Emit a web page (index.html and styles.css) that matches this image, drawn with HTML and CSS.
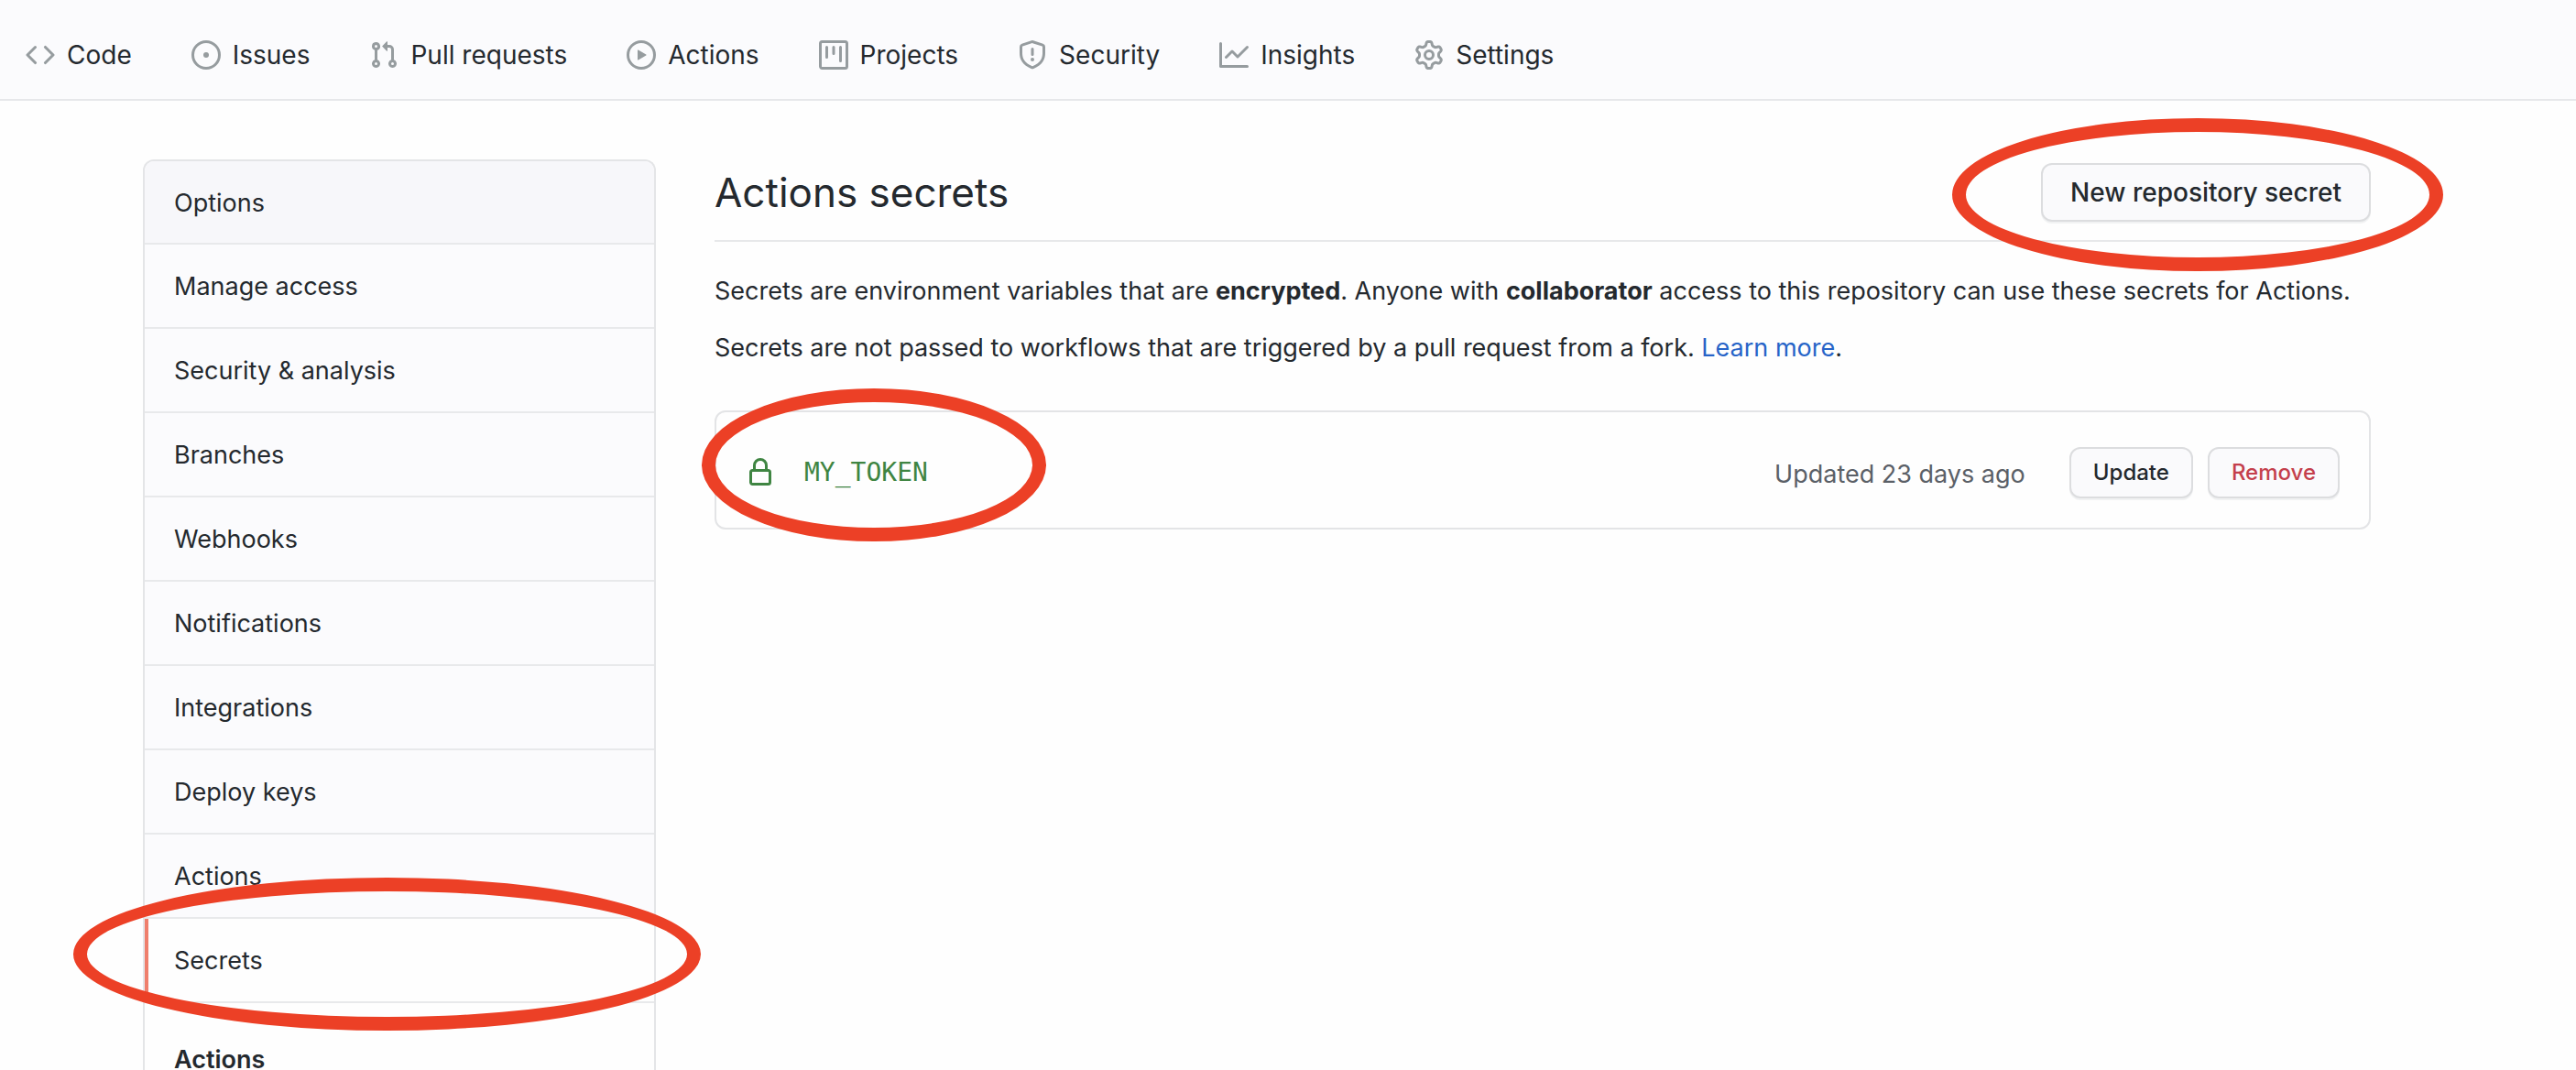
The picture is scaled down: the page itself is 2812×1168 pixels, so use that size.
FILE: index.html
```html
<!DOCTYPE html>
<html lang="en">
<head>
<meta charset="utf-8">
<title>Actions secrets</title>
<link rel="stylesheet" href="styles.css">
</head>
<body>
<nav class="repo-nav" aria-label="Repository">
  <a class="tab" href="#"><svg class="icon" viewBox="0 0 16 16"><path d="M4.72 3.22a.75.75 0 011.06 1.06L2.06 8l3.72 3.72a.75.75 0 11-1.06 1.06L.47 8.53a.75.75 0 010-1.06l4.25-4.25zm6.56 0a.75.75 0 10-1.06 1.06L13.94 8l-3.72 3.72a.75.75 0 101.06 1.06l4.25-4.25a.75.75 0 000-1.06l-4.25-4.25z"/></svg>Code</a>
  <a class="tab" href="#"><svg class="icon" viewBox="0 0 16 16"><circle class="line" cx="8" cy="8" r="7.25"/><circle cx="8" cy="8" r="1.5"/></svg>Issues</a>
  <a class="tab" href="#"><svg class="icon" viewBox="0 0 16 16"><path fill-rule="evenodd" d="M7.177 3.073L9.573.677A.25.25 0 0110 .854v4.792a.25.25 0 01-.427.177L7.177 3.427a.25.25 0 010-.354zM3.75 2.5a.75.75 0 100 1.5.75.75 0 000-1.5zm-2.25.75a2.25 2.25 0 113 2.122v5.256a2.251 2.251 0 11-1.5 0V5.372A2.25 2.25 0 011.5 3.25zM11 2.5h-1V4h1a1 1 0 011 1v5.628a2.251 2.251 0 101.5 0V5A2.5 2.5 0 0011 2.5zm1 10.25a.75.75 0 111.5 0 .75.75 0 01-1.5 0zM3.75 12a.75.75 0 100 1.5.75.75 0 000-1.5z"/></svg>Pull requests</a>
  <a class="tab" href="#"><svg class="icon" viewBox="0 0 16 16"><circle class="line" cx="8" cy="8" r="7.25"/><path d="M6.379 5.227A.25.25 0 006 5.442v5.117a.25.25 0 00.379.214l4.264-2.559a.25.25 0 000-.428L6.379 5.227z"/></svg>Actions</a>
  <a class="tab" href="#"><svg class="icon" viewBox="0 0 16 16"><path fill-rule="evenodd" d="M1.75 0A1.75 1.75 0 000 1.75v12.5C0 15.216.784 16 1.75 16h12.5A1.75 1.75 0 0016 14.25V1.75A1.75 1.75 0 0014.25 0H1.75zM1.5 1.75a.25.25 0 01.25-.25h12.5a.25.25 0 01.25.25v12.5a.25.25 0 01-.25.25H1.75a.25.25 0 01-.25-.25V1.75zM11.75 3a.75.75 0 00-.75.75v7.5a.75.75 0 001.5 0v-7.5a.75.75 0 00-.75-.75zm-8.25.75a.75.75 0 011.5 0v5.5a.75.75 0 01-1.5 0v-5.5zM8 3a.75.75 0 00-.75.75v3.5a.75.75 0 001.5 0v-3.5A.75.75 0 008 3z"/></svg>Projects</a>
  <a class="tab" href="#"><svg class="icon" viewBox="0 0 16 16"><path fill-rule="evenodd" d="M7.467.133a1.75 1.75 0 011.066 0l5.25 1.68A1.75 1.75 0 0115 3.48V7c0 1.566-.32 3.182-1.303 4.682-.983 1.498-2.585 2.813-5.032 3.855a1.7 1.7 0 01-1.33 0c-2.447-1.042-4.049-2.357-5.032-3.855C1.32 10.182 1 8.566 1 7V3.48a1.75 1.75 0 011.217-1.667l5.25-1.68zm.61 1.429a.25.25 0 00-.153 0l-5.25 1.68a.25.25 0 00-.174.238V7c0 1.358.275 2.666 1.057 3.86.784 1.194 2.121 2.34 4.366 3.297a.2.2 0 00.154 0c2.245-.956 3.582-2.104 4.366-3.298C13.225 9.666 13.5 8.36 13.5 7V3.48a.25.25 0 00-.174-.237l-5.25-1.68zM9 10.5a1 1 0 11-2 0 1 1 0 012 0zm-.25-5.75a.75.75 0 10-1.5 0v3a.75.75 0 001.5 0v-3z"/></svg>Security</a>
  <a class="tab" href="#"><svg class="icon" viewBox="0 0 16 16"><path d="M1.5 1.75a.75.75 0 00-1.5 0v12.5c0 .414.336.75.75.75h14.5a.75.75 0 000-1.5H1.5V1.75zm14.28 2.53a.75.75 0 00-1.06-1.06L10 7.94 7.53 5.47a.75.75 0 00-1.06 0L3.22 8.72a.75.75 0 001.06 1.06L7 7.06l2.47 2.47a.75.75 0 001.06 0l5.25-5.25z"/></svg>Insights</a>
  <a class="tab" href="#"><svg class="icon" viewBox="0 0 16 16"><path fill-rule="evenodd" d="M7.429 1.525a6.593 6.593 0 011.142 0c.036.003.108.036.137.146l.289 1.105c.147.56.55.967.997 1.189.174.086.341.183.501.29.417.278.97.423 1.53.27l1.102-.303c.11-.03.175.016.195.046.219.31.41.641.573.989.014.031.022.11-.059.19l-.815.806c-.411.406-.562.957-.53 1.456a4.588 4.588 0 010 .582c-.032.499.119 1.05.53 1.456l.815.806c.08.08.073.159.059.19a6.494 6.494 0 01-.573.99c-.02.029-.086.074-.195.045l-1.103-.303c-.559-.153-1.112-.008-1.529.27-.16.107-.327.204-.5.29-.449.222-.851.628-.998 1.189l-.289 1.105c-.029.11-.101.143-.137.146a6.613 6.613 0 01-1.142 0c-.036-.003-.108-.037-.137-.146l-.289-1.105c-.147-.56-.55-.967-.997-1.189a4.502 4.502 0 01-.501-.29c-.417-.278-.97-.423-1.53-.27l-1.102.303c-.11.03-.175-.016-.195-.046a6.492 6.492 0 01-.573-.989c-.014-.031-.022-.11.059-.19l.815-.806c.411-.406.562-.957.53-1.456a4.587 4.587 0 010-.582c.032-.499-.119-1.05-.53-1.456l-.815-.806c-.08-.08-.073-.159-.059-.19a6.44 6.44 0 01.573-.99c.02-.029.086-.075.195-.045l1.103.303c.559.153 1.112.008 1.529-.27.16-.107.327-.204.5-.29.449-.222.851-.628.998-1.189l.289-1.105c.029-.11.101-.143.137-.146zM8 0c-.236 0-.47.01-.701.03-.743.065-1.29.615-1.458 1.261l-.29 1.106c-.017.066-.078.158-.211.224a5.994 5.994 0 00-.668.386c-.123.082-.233.09-.3.071L3.27 2.776c-.644-.177-1.392.02-1.82.63a7.977 7.977 0 00-.704 1.217c-.315.675-.111 1.422.363 1.891l.815.806c.05.048.098.147.088.294a6.084 6.084 0 000 .772c.01.147-.038.246-.088.294l-.815.806c-.474.469-.678 1.216-.363 1.891.2.428.436.835.704 1.218.428.609 1.176.806 1.82.63l1.103-.303c.066-.019.176-.011.299.071.213.143.436.272.668.386.133.066.194.158.212.224l.289 1.106c.169.646.715 1.196 1.458 1.26a8.094 8.094 0 001.402 0c.743-.064 1.29-.614 1.458-1.26l.29-1.106c.017-.066.078-.158.211-.224a5.98 5.98 0 00.668-.386c.123-.082.233-.09.3-.071l1.102.302c.644.177 1.392-.02 1.82-.63.268-.382.505-.789.704-1.217.315-.675.111-1.422-.364-1.891l-.814-.806c-.05-.048-.098-.147-.088-.294a6.1 6.1 0 000-.772c-.01-.147.039-.246.088-.294l.814-.806c.475-.469.679-1.216.364-1.891a7.992 7.992 0 00-.704-1.218c-.428-.609-1.176-.806-1.82-.63l-1.103.303c-.066.019-.176.011-.299-.071a5.991 5.991 0 00-.668-.386c-.133-.066-.194-.158-.212-.224L10.16 1.29C9.99.645 9.444.095 8.701.031A8.094 8.094 0 008 0zm1.5 8a1.5 1.5 0 11-3 0 1.5 1.5 0 013 0zM11 8a3 3 0 11-6 0 3 3 0 016 0z"/></svg>Settings</a>
</nav>

<div class="layout">
  <nav class="menu" aria-label="Repository settings">
    <a class="menu-item menu-first" href="#">Options</a>
    <a class="menu-item" href="#">Manage access</a>
    <a class="menu-item" href="#">Security &amp; analysis</a>
    <a class="menu-item" href="#">Branches</a>
    <a class="menu-item" href="#">Webhooks</a>
    <a class="menu-item" href="#">Notifications</a>
    <a class="menu-item" href="#">Integrations</a>
    <a class="menu-item" href="#">Deploy keys</a>
    <a class="menu-item" href="#">Actions</a>
    <a class="menu-item menu-current" href="#" aria-current="page">Secrets<span class="ring ring-menu"></span></a>
    <h2 class="menu-heading">Actions</h2>
  </nav>

  <main class="content">
    <header class="page-head">
      <h1 class="page-title">Actions secrets</h1>
      <div class="marked">
        <button class="btn" type="button">New repository secret</button>
        <span class="ring ring-new"></span>
      </div>
    </header>
    <p class="note">Secrets are environment variables that are <strong>encrypted</strong>. Anyone with <strong>collaborator</strong> access to this repository can use these secrets for Actions.</p>
    <p class="note">Secrets are not passed to workflows that are triggered by a pull request from a fork. <a class="link" href="#">Learn more</a>.</p>
    <div class="secret">
      <svg class="icon lock" viewBox="0 0 16 16"><path fill-rule="evenodd" d="M4 4v2h-.25A1.75 1.75 0 002 7.75v5.5c0 .966.784 1.75 1.75 1.75h8.5A1.75 1.75 0 0014 13.25v-5.5A1.75 1.75 0 0012.25 6H12V4a4 4 0 10-8 0zm6.5 2V4a2.5 2.5 0 10-5 0v2h5zM12 7.5h.25a.25.25 0 01.25.25v5.5a.25.25 0 01-.25.25h-8.5a.25.25 0 01-.25-.25v-5.5a.25.25 0 01.25-.25H12z"/></svg>
      <code class="secret-name">MY_TOKEN</code>
      <span class="updated">Updated 23 days ago</span>
      <div class="actions">
        <button class="btn btn-small" type="button">Update</button>
        <button class="btn btn-small btn-danger" type="button">Remove</button>
      </div>
      <span class="ring ring-token"></span>
    </div>
  </main>
</div>
</body>
</html>
```
FILE: styles.css
```css
* {
  box-sizing: border-box;
}

body {
  margin: 0;
  height: 100vh;
  overflow: hidden;
  display: flex;
  flex-direction: column;
  background: #fefefe;
  color: #24292e;
  font: 27px/42px Inter, "Liberation Sans", sans-serif;
}

a {
  color: inherit;
  text-decoration: none;
}

/* Repository tabs */
.repo-nav {
  flex: none;
  display: flex;
  gap: 65px;
  padding: 39px 28px 27px;
  background: #fbfbfd;
  border-bottom: 2px solid #e6e7ea;
  font-size: 28px;
}

.tab {
  display: flex;
  align-items: center;
  gap: 13px;
  white-space: nowrap;
}

.icon {
  flex: none;
  width: 32px;
  height: 32px;
  fill: #969c9f;
}

.line {
  fill: none;
  stroke: #969c9f;
  stroke-width: 1.5;
}

/* Two-column settings page */
.layout {
  flex: 1;
  min-height: 0;
  display: flex;
  gap: 64px;
  padding: 64px 224px 0 156px;
}

.menu {
  flex: none;
  width: 560px;
  border: 2px solid #e4e5e7;
  border-bottom: 0;
  border-radius: 12px 12px 0 0;
}

.menu-item {
  position: relative;
  display: block;
  padding: 25px 32px 23px;
  background: #fbfbfd;
  border-bottom: 2px solid #e8e9eb;
}

.menu-first {
  padding-bottom: 22px;
  background: #f7f7fa;
  border-radius: 10px 10px 0 0;
}

.menu-current {
  background: #fefefe;
  box-shadow: inset 4px 0 #ef7f6c;
}

.menu-heading {
  margin: 0;
  padding: 41px 32px;
  font-size: 27px;
  line-height: 42px;
  font-weight: 600;
}

.content {
  flex: 1;
  min-width: 0;
}

.page-head {
  display: flex;
  align-items: center;
  justify-content: space-between;
  padding: 4px 0 20px;
  border-bottom: 2px solid #e7e8ea;
  margin-bottom: 33px;
}

.page-title {
  margin: 0;
  font-size: 44px;
  line-height: 64px;
  font-weight: 400;
}

.btn {
  height: 64px;
  padding: 0 30px;
  border: 2px solid #dcdddf;
  border-radius: 12px;
  background: #fafafc;
  box-shadow: 0 2px 0 #f1f2f3;
  color: #24292e;
  font: 500 28px/40px Inter, "Liberation Sans", sans-serif;
  white-space: nowrap;
}

.btn-small {
  height: 56px;
  padding: 0 24px;
  font-size: 24px;
}

.btn-danger {
  color: #c43f4c;
}

.note {
  margin: 0 0 20px;
}

.note strong {
  font-weight: 700;
}

.link {
  color: #2764c8;
}

.secret {
  position: relative;
  display: flex;
  align-items: center;
  margin-top: 47px;
  padding: 38px 32px 32px;
  border: 2px solid #e3e4e6;
  border-radius: 12px;
}

.lock {
  fill: #3f8542;
}

.secret-name {
  margin-left: 32px;
  color: #3f8542;
  font: 28px/42px "DejaVu Sans Mono", monospace;
}

.updated {
  margin-left: auto;
  padding-top: 4px;
  color: #5b6067;
}

.actions {
  display: flex;
  gap: 16px;
  margin-left: 48px;
}

/* Highlight rings drawn over the page */
.marked {
  position: relative;
  display: flex;
}

.ring {
  position: absolute;
  z-index: 1;
  height: 167px;
  border: 15px solid #ec4026;
  border-radius: 50%;
  pointer-events: none;
}

.ring-new {
  top: -49px;
  left: -97px;
  right: -79px;
}

.ring-menu {
  top: -45px;
  left: -78px;
  right: -51px;
}

.ring-token {
  top: -26px;
  left: -16px;
  width: 376px;
}
```
